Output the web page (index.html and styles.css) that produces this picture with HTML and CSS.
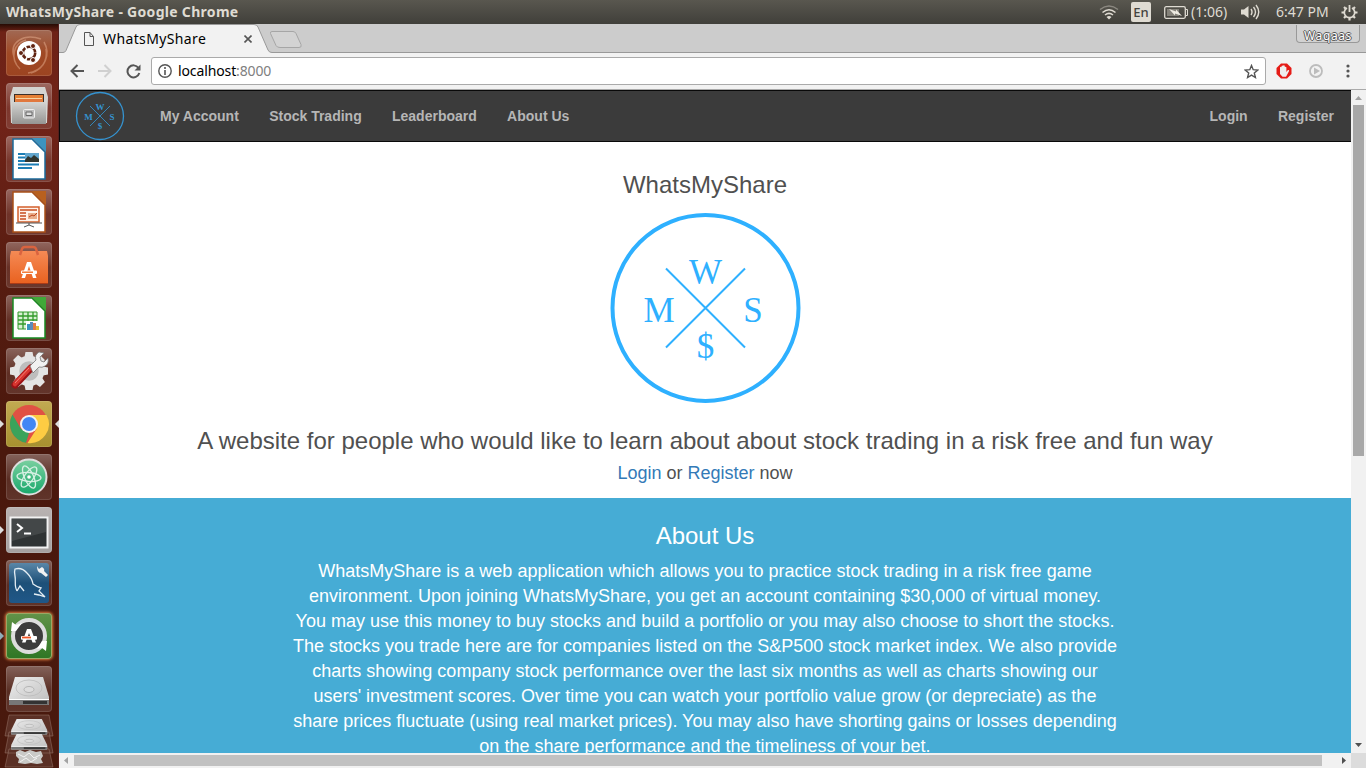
FILE: index.html
```html
<!DOCTYPE html>
<html lang="en">
<head>
<meta charset="utf-8">
<title>WhatsMyShare</title>
<link rel="stylesheet" href="styles.css">
</head>
<body>
<svg class="defs" width="0" height="0">
  <defs>
    <linearGradient id="metal" x1="0" y1="0" x2="0" y2="1"><stop offset="0" stop-color="#d4d4d2"/><stop offset="1" stop-color="#959593"/></linearGradient>
    <linearGradient id="drive" x1="0" y1="0" x2="1" y2="1"><stop offset="0" stop-color="#eee"/><stop offset="1" stop-color="#bdbdbd"/></linearGradient>
    <linearGradient id="bag" x1="0" y1="0" x2="0" y2="1"><stop offset="0" stop-color="#f58a55"/><stop offset="1" stop-color="#e9611f"/></linearGradient>
    <linearGradient id="sea" x1="0" y1="0" x2="0" y2="1"><stop offset="0" stop-color="#5a87a8"/><stop offset=".5" stop-color="#1d5078"/><stop offset="1" stop-color="#1f5788"/></linearGradient>
    <linearGradient id="mint" x1="0" y1="0" x2="0" y2="1"><stop offset="0" stop-color="#7bd0a0"/><stop offset="1" stop-color="#18a86b"/></linearGradient>
    <g id="disk"><path d="M9 11h28l6 20v7q0 1-1 1H4q-1 0-1-1v-7z" fill="url(#drive)"/><path d="M3 34h40v4q0 1-1 1H4q-1 0-1-1z" fill="#777"/><path d="M3 33.500h40" stroke="#fff"/><path d="M17 36.500h24" stroke="#333" stroke-width="3"/><ellipse cx="23" cy="22" rx="13" ry="8" fill="none" stroke="#bbb" stroke-width=".8"/><ellipse cx="23" cy="23.500" rx="5" ry="3" fill="#ddd" stroke="#aaa" stroke-width=".8"/></g>
    <g id="mark"><circle cx="100.500" cy="100" r="93" fill="none" stroke="currentColor" stroke-width="4"/><path d="M61 60.500l79 79M140 60.500l-79 79" stroke="currentColor" stroke-width="2"/></g>
  </defs>
</svg>
<div class="desktop">
  <header class="panel">
    <span class="panel-title">WhatsMyShare - Google Chrome</span>
    <div class="indicators">
      <svg class="wifi" width="20" height="16" viewBox="0 0 20 16" fill="none" stroke="#dfdbd2" stroke-width="1.500"><path d="M1 5.500q9-7 18 0" stroke="#8b8880"/><path d="M3.500 8.500q6.500-5.500 13 0M6 11q4-3.300 8 0"/><path d="M7.500 13q2.500-2 5 0L10 15.500z" fill="#dfdbd2" stroke="none"/></svg>
      <span class="lang">En</span>
      <svg class="battery" width="24" height="13" viewBox="0 0 24 13"><rect x=".7" y=".7" width="20.600" height="11.600" rx="1.500" fill="none" stroke="#dfdbd2" stroke-width="1.300"/><path d="M22 3.500h1.500v6H22" fill="none" stroke="#dfdbd2"/><path d="M3 3h12v7H3z" fill="#85827a"/><path d="M5 3l7 2.500V3.500l6 6.500-7-2.500V9.500z" fill="#eeeae1"/></svg>
      <span class="remaining">(1:06)</span>
      <svg class="volume" width="20" height="16" viewBox="0 0 20 16"><path d="M1 5.500h3L8.500 2v12L4 10.500H1z" fill="#dfdbd2"/><path d="M11 5q2 3 0 6M13.500 3q4 5 0 10M16 1q5.500 7 0 14" fill="none" stroke="#dfdbd2" stroke-width="1.400"/></svg>
      <span class="clock">6:47 PM</span>
      <svg class="power" width="17" height="17" viewBox="0 0 17 17" fill="none" stroke="#dfdbd2"><path d="M6 3.900a5.200 5.200 0 1 0 5 0" stroke-width="1.700"/><path d="M8.500 1v7" stroke-width="1.800"/><path d="M3 3l1.700 1.700M14 3l-1.700 1.700M.5 8.500h2.800M13.700 8.500h2.800M3 14l1.700-1.700M14 14l-1.700-1.700M8.500 13.700v2.800" stroke-width="2.200"/></svg>
    </div>
  </header>
  <div class="workspace">
    <nav class="launcher">
      <div class="tile ubuntu"><svg viewBox="0 0 46 46"><path d="M8 27C3 12 18 3 35 9M14 39C3 28 8 13 20 10M38 12c7 12 1 27-13 31M22 43c14-2 20-12 18-24" fill="none" stroke="#eeb798" stroke-opacity=".45" stroke-width="1.500"/><circle cx="23" cy="23" r="12" fill="#fff"/><circle cx="23" cy="23" r="6.200" fill="none" stroke="#612412" stroke-width="2.600" stroke-dasharray="11.500 1.500"/><g fill="#612412" stroke="#fff"><circle cx="15" cy="23" r="2.500"/><circle cx="27" cy="16" r="2.500"/><circle cx="27" cy="30" r="2.500"/></g></svg></div>
      <div class="tile"><svg viewBox="0 0 46 46"><path d="M7 4h32l3 10-1 26H5L4 14z" fill="#d4d4d1"/><path d="M8 11h30v10H8z" fill="#3d302a"/><path d="M9 12h28v7H9z" fill="#e58035"/><path d="M10 15h26v5H10z" fill="#f7d5a2"/><path d="M10 16h26v3H10z" fill="#e1783e"/><path d="M6 19h34v22H6z" fill="url(#metal)"/><rect x="17.500" y="26.500" width="11" height="8.500" rx="1" fill="#bbb" stroke="#eee"/><path d="M20 29h6v3.500h-6z" fill="#ddd" stroke="#666"/></svg></div>
      <div class="tile"><svg viewBox="0 0 46 46"><path d="M7 3h19l13 13v27H7z" fill="#fff" stroke="#1a6b9c" stroke-width="1.500"/><path d="M26 2h14v14z" fill="#3c93bf"/><path d="M12 17h9v2h-9zm0 3.500h9v2h-9zm0 3.500h9v2h-9zm0 3.500h21v2H12zm0 3.500h14v2H12z" fill="#1b7db5"/><path d="M19 17h14v9H19z" fill="#62a6ce"/><path d="M19 26v-2l3-4 3 2 3-3 5 4v3z" fill="#30352f"/></svg></div>
      <div class="tile"><svg viewBox="0 0 46 46"><path d="M7 3h19l13 13v27H7z" fill="#fff" stroke="#a95018" stroke-width="1.500"/><path d="M26 2h14v14z" fill="#b8601f"/><path d="M12 18h21v15H12z" fill="#fff3eb" stroke="#d4602c" stroke-width="1.500"/><path d="M14 21h17M14 24h6m-6 3h6m-6 3h6" stroke="#c74d20" stroke-width="1.500"/><path d="M22 24h9v6h-9z" fill="#e9ad8b"/><path d="M23 28l3-2 2 1 3-3" fill="none" stroke="#ba4219"/><path d="M10 34h26M23 34v2l-5 2m5-2l5 2" fill="none" stroke="#555"/></svg></div>
      <div class="tile"><svg viewBox="0 0 46 46"><path d="M5 9h36l1 5v28H4V14z" fill="url(#bag)"/><path d="M14 13l2-6q.5-2 3-2h8q2.500 0 3 2l2 6" fill="none" stroke="#d9633f" stroke-width="2.500"/><path d="M4 41.500h38" stroke="#ab3b16"/><path d="M15.500 36L21 20h4l5.500 16H27l-4-12-4 12z" fill="#fff"/><rect x="15" y="28.500" width="16" height="3.500" rx="1" fill="#fff"/><path d="M16 30.200h11" stroke="#f37028" stroke-width="1.400"/></svg></div>
      <div class="tile"><svg viewBox="0 0 46 46"><path d="M7 3h19l13 13v27H7z" fill="#fff" stroke="#188a22" stroke-width="1.500"/><path d="M26 2h14v14z" fill="#40a938"/><path d="M12 17h19v17H12z" fill="#d8f0d3" stroke="#329a2b"/><path d="M12 21h19M12 25h19M12 29h19M17 17v17M22 17v17M27 17v17" stroke="#329a2b" stroke-width="1.300"/><path d="M20 26h13v9H20z" fill="#fff"/><path d="M21 29h3v6h-3z" fill="#3795bd"/><path d="M24 27h3v8h-3z" fill="#5c8aba"/><path d="M27 28h3v7h-3z" fill="#e17a46"/><path d="M30 31h3v4h-3z" fill="#e6bd34"/></svg></div>
      <div class="tile"><svg viewBox="0 0 46 46"><circle cx="23" cy="23" r="12.500" fill="#bdbdbd" stroke="#e4e4e4" stroke-width="5.500"/><g fill="#e4e4e4"><path id="cog" d="M18.500 9l1-5h7l1 5zM18.500 37l1 5h7l1-5z"/><use href="#cog" transform="rotate(45 23 23)"/><use href="#cog" transform="rotate(90 23 23)"/><use href="#cog" transform="rotate(135 23 23)"/></g><path d="M9 37l16-17" stroke="#9c1216" stroke-width="7" stroke-linecap="round"/><path d="M9 36l15-16" stroke="#d8352f" stroke-width="4.500" stroke-linecap="round"/><path d="M9 35l14-15" stroke="#f08078"/><path d="M24 18l6-6q-2-5 3-8l5 1-4 4 1 4 3 1 4-4q1 6-3 8-3 2-6 1l-6 6z" fill="#f1f1f1" stroke="#777" stroke-width=".8"/></svg></div>
      <div class="tile chrome"><svg viewBox="0 0 46 46"><circle cx="23" cy="23" r="19" fill="#e05144"/><path d="M6.500 13.500L15 28l8 4-3 9.800A19 19 0 0 1 6.500 13.500z" fill="#3ba35b"/><path d="M23 14h17.500A19 19 0 0 1 21.500 42l9-14z" fill="#fdcc43"/><circle cx="23" cy="23" r="9" fill="#f2f2f2"/><circle cx="23" cy="23" r="7" fill="#4286f4"/></svg><i class="arrow left"></i><i class="arrow right"></i></div>
      <div class="tile"><svg viewBox="0 0 46 46"><circle cx="23" cy="23" r="17.500" fill="url(#mint)" stroke="#dedede" stroke-width="2"/><g fill="none" stroke="#d6f0e3" stroke-width="1.300"><ellipse cx="23" cy="23" rx="4.500" ry="12" transform="rotate(-25 23 23)"/><ellipse cx="23" cy="23" rx="4.500" ry="12" transform="rotate(35 23 23)"/><ellipse cx="23" cy="23" rx="4.500" ry="12" transform="rotate(95 23 23)"/></g><circle cx="23" cy="23" r="1.800" fill="#fff"/></svg></div>
      <div class="tile term"><svg viewBox="0 0 46 46"><rect x="4.500" y="10.500" width="37" height="30" fill="#2f3334" stroke="#f2f2f2" stroke-width="2"/><path d="M6 12h34v13L6 34z" fill="#434748"/><path d="M11 17l5 4-5 4" fill="none" stroke="#fff" stroke-width="2"/><path d="M18 26.500h7" stroke="#fff" stroke-width="2"/></svg><i class="arrow left"></i></div>
      <div class="tile"><svg viewBox="0 0 46 46"><rect x="3" y="3" width="40" height="40" rx="3" fill="url(#sea)"/><path d="M11 31C8 26 10 21 9 16q-1-4 0-7 7-2 12 4 5 5 6 11 4 3 8 4l-2 3 6 6-6-2-5-1M11 31l3-5 4 5" fill="none" stroke="#e4eef4" stroke-width="1.300"/><path d="M31 6l2 3 3-2q3 2 2 4l4 4-2 2-5-4q-4 0-4-7z" fill="#f2f2f2"/></svg></div>
      <div class="tile updater"><svg viewBox="0 0 46 46"><circle cx="23" cy="23" r="16" fill="#3c3c3c" stroke="#ddd" stroke-width="4"/><path d="M5 18l1-9 4 3 6-2-6 8zM41 28l-1 10-4-3-5 1 5-8z" fill="#fff"/><path d="M16 29.500L21 16h4l5 13.500h-3.500L23 20l-3.500 9.500z" fill="#fff"/><rect x="15" y="23" width="16" height="3.800" rx="1" fill="#fff"/><path d="M16 24.500h9" stroke="#ee5424" stroke-width="1.800"/></svg><i class="arrow left hollow"></i></div>
      <div class="tile"><svg viewBox="0 0 46 46"><use href="#disk"/></svg></div>
      <div class="folded"><svg width="50" height="54" viewBox="0 0 50 54"><g fill="#fff" fill-opacity=".1" stroke="#ad8b80" stroke-opacity=".4"><path d="M5 1h40l4 21H1zM5 18h40l4 21H1zM5 35h40l4 18H1z"/></g><use href="#disk" transform="translate(4.500 -1) scale(.9 .55)"/><use href="#disk" transform="translate(4.500 14) scale(.9 .55)"/><path d="M12 38l4-2 5 2 5-2 6 2 5-1 2 5-2 3 2 4-6 1-6-1-6 1-7-1 1-4-3-3z" fill="#cacac7"/><path d="M14 40l6 3 5-4 5 5 6-3M16 48l6-4 5 4 6-4" fill="none" stroke="#fff" stroke-opacity=".8"/></svg></div>
    </nav>
    <main class="browser">
      <div class="tabstrip">
        <svg class="tabshape" width="260" height="29" viewBox="0 0 260 29"><path d="M0 29v-.5h4q2 0 3-2L17 3q1-2.500 4-2.500h174q3 0 4 2.500l10 23q1 2.500 4 2.500v.5z" fill="#f2f2f2"/><path d="M0 28.500h4q2 0 3-2L17 3q1-2.500 4-2.500h174q3 0 4 2.500l10 23q1 2.500 4 2.500h47" fill="none" stroke="#999"/><path d="M213 7.500h21q2 0 3 2l5 11q1 3-2 3h-19q-3 0-4-2l-5.500-12q-.5-2 1.500-2z" fill="#d3d3d3" stroke="#a6a6a6"/></svg>
        <div class="tab"><svg width="10" height="14" viewBox="0 0 10 14" fill="none" stroke="#555"><path d="M.5.500h5.500l3.500 4v9H.5zM6 .5v4h3.500"/></svg><span>WhatsMyShare</span><svg class="close" width="8" height="8" viewBox="0 0 8 8" stroke="#555" stroke-width="1.600"><path d="M.5.500l7 7M7.500.500l-7 7"/></svg></div>
        <span class="profile">Waqaas</span>
      </div>
      <div class="toolbar">
        <svg class="back" width="14" height="14" viewBox="0 0 14 14" fill="none" stroke="#555" stroke-width="2"><path d="M14 7H1.500M7.500 1l-6 6 6 6"/></svg>
        <svg class="forward" width="14" height="14" viewBox="0 0 14 14" fill="none" stroke="#d0d0d0" stroke-width="2"><path d="M0 7h12.500M6.500 1l6 6-6 6"/></svg>
        <svg class="reload" width="15" height="15" viewBox="0 0 15 15"><path d="M12.500 4A6 6 0 1 0 13.300 9" fill="none" stroke="#555" stroke-width="2"/><path d="M14.500.500v6h-6z" fill="#555"/></svg>
        <div class="omnibox">
          <svg width="14" height="14" viewBox="0 0 14 14"><circle cx="7" cy="7" r="6.200" fill="none" stroke="#555" stroke-width="1.400"/><path d="M7 6v5M7 3v2" stroke="#555" stroke-width="1.600"/></svg>
          <span class="url">localhost<span>:8000</span></span>
          <svg class="star" width="15" height="15" viewBox="0 0 15 15"><path d="M7.500 1.500l1.700 4.200 4.600.4-3.500 2.900 1.100 4.500-3.900-2.400-3.900 2.400 1.100-4.500L1.200 6.100l4.600-.4z" fill="none" stroke="#555" stroke-width="1.400"/></svg>
        </div>
        <svg class="adblock" width="16" height="16" viewBox="0 0 16 16"><path d="M5 .5h6L15.500 5v6L11 15.500H5L.5 11V5z" fill="#e51b16"/><path d="M4 8V4.200q.9-1 1.500 0V3q.9-1 1.600 0v-.5q.9-.8 1.700.3V4q1.200-.8 1.600.4V9l1.500-1.900q1.500-.3 1.200.8L11 12l-1 1.800H6.500L4 11z" fill="#eee"/></svg>
        <svg class="play" width="14" height="14" viewBox="0 0 14 14"><circle cx="7" cy="7" r="6" fill="none" stroke="#bcbcbc" stroke-width="1.800"/><path d="M5 3.500L11 7l-6 3.500z" fill="#bcbcbc"/></svg>
        <svg class="menu" width="4" height="14" viewBox="0 0 4 14" fill="#555"><circle cx="2" cy="2" r="1.600"/><circle cx="2" cy="7" r="1.600"/><circle cx="2" cy="12" r="1.600"/></svg>
      </div>
      <div class="viewport">
        <div class="page">
          <nav class="navbar">
            <svg class="brand" width="50" height="50" viewBox="0 0 50 50"><circle cx="25" cy="25" r="23.500" fill="none" stroke="#3593d0" stroke-width="1.300"/><path d="M15 15l20 20M35 15l-20 20" stroke="#3585b8"/><g fill="#3593d0" font-family="Liberation Serif, serif" font-size="9" font-weight="bold" text-anchor="middle"><text x="25" y="19">W</text><text x="13.500" y="29">M</text><text x="37" y="29">S</text><text x="25" y="38">$</text></g></svg>
            <a>My Account</a><a>Stock Trading</a><a>Leaderboard</a><a>About Us</a>
            <a class="login">Login</a><a>Register</a>
          </nav>
          <section class="hero">
            <h1>WhatsMyShare</h1>
            <svg class="logo" width="200" height="200" viewBox="0 0 200 200"><use href="#mark"/><g fill="#2eb0ff" font-family="Liberation Serif, serif" font-size="35" text-anchor="middle"><text x="100.500" y="76">W</text><text x="54" y="114">M</text><text x="148" y="114">S</text><text x="100.500" y="150">$</text></g></svg>
            <h2>A website for people who would like to learn about about stock trading in a risk free and fun way</h2>
            <p><a>Login</a> or <a>Register</a> now</p>
          </section>
          <section class="about">
            <h2>About Us</h2>
            <p>WhatsMyShare is a web application which allows you to practice stock trading in a risk free game<br>environment. Upon joining WhatsMyShare, you get an account containing $30,000 of virtual money.<br>You may use this money to buy stocks and build a portfolio or you may also choose to short the stocks.<br>The stocks you trade here are for companies listed on the S&amp;P500 stock market index. We also provide<br>charts showing company stock performance over the last six months as well as charts showing our<br>users' investment scores. Over time you can watch your portfolio value grow (or depreciate) as the<br>share prices fluctuate (using real market prices). You may also have shorting gains or losses depending<br>on the share performance and the timeliness of your bet.</p>
          </section>
        </div>
        <div class="vscroll"><svg width="15" height="15"><path d="M4 10h7L7.500 6z" fill="#a3a3a3"/></svg><div class="thumb"></div><svg class="end" width="15" height="15"><path d="M4 5h7L7.500 9z" fill="#505050"/></svg></div>
        <div class="hscroll"><svg width="15" height="15"><path d="M9 4v7L5 7.500z" fill="#a3a3a3"/></svg><div class="thumb"></div><svg class="end" width="15" height="15"><path d="M6 4v7l4-3.500z" fill="#505050"/></svg></div>
        <div class="corner"></div>
      </div>
    </main>
  </div>
</div>
</body>
</html>
```
FILE: styles.css
```css
* { box-sizing: border-box; }
body { margin: 0; overflow: hidden; font-family: "Liberation Sans", Arial, sans-serif; }
h1, h2, p { margin: 0; font-weight: normal; }
svg { display: block; flex: none; }
.defs { position: absolute; }
.desktop { width: 1366px; height: 768px; display: flex; flex-direction: column; overflow: hidden; }

.panel { height: 24px; flex: none; display: flex; align-items: center; justify-content: space-between; padding: 0 8px 0 6px; background: linear-gradient(#59574f, #403f3a); color: #dfdbd2; font: 14px/24px "Noto Sans", sans-serif; white-space: nowrap; }
.panel-title { font-weight: bold; letter-spacing: .3px; }
.indicators { display: flex; align-items: center; }
.lang { width: 20px; height: 20px; margin-left: 12px; border-radius: 2px; background: #dfdbd2; color: #45433e; text-align: center; line-height: 20px; font-size: 13px; font-weight: 500; }
.battery { margin-left: 13px; }
.remaining { width: 37px; margin-left: 3px; }
.volume { margin-left: 12px; }
.clock { width: 53px; margin-left: 16px; }
.power { margin-left: 12px; }

.workspace { flex: 1; min-height: 0; display: flex; }
.launcher { width: 59px; flex: none; display: flex; flex-direction: column; gap: 7px; padding: 6px 0 0 6px; background: linear-gradient(#260b04 0, #6e2216 8px, #702318 100px, #561c10 260px, #4a180d 420px, #49190d 100%); border-right: 1px solid #551e1b; }
.tile { position: relative; width: 46px; height: 46px; flex: none; border-radius: 4px; background: linear-gradient(rgba(255,255,255,.32), rgba(255,255,255,.09) 55%, rgba(255,255,255,.12)); box-shadow: inset 0 0 0 1px rgba(255,255,255,.12); }
.tile svg { width: 46px; height: 46px; }
.ubuntu { background: linear-gradient(#a16954, #a04925 50%, #9c4421); }
.chrome { background: linear-gradient(#c2aa52, #a7902f); }
.term { background: linear-gradient(#b9b3b2, #a5a1a0); }
.updater { background: linear-gradient(#629349, #2e7624); box-shadow: inset 0 0 0 1px #9ba765, 0 0 3px 1px #e08042; }
.arrow { position: absolute; top: 19px; border: 4px solid transparent; }
.arrow.left { left: -6px; border-left-color: #ddd; border-right-width: 0; }
.arrow.right { right: -7px; border-right-color: #ddd; border-left-width: 0; }
.arrow.hollow { border-left-color: #8faeb9; }
.folded { width: 50px; margin: -5px 0 0 -2px; }

.browser { flex: 1; min-width: 0; display: flex; flex-direction: column; }
.tabstrip { position: relative; height: 29px; flex: none; background: #ccc; border-bottom: 1px solid #999; }
.tabshape { position: absolute; left: 0; top: 0; }
.tab { position: relative; display: flex; align-items: center; width: 193px; height: 29px; margin-left: 25px; font: 14px/29px "Noto Sans", sans-serif; color: #000; }
.tab span { margin-left: 9px; letter-spacing: .37px; white-space: nowrap; }
.close { margin: 1px 25px 0 auto; }
.profile { position: absolute; right: 6px; top: 1px; width: 64px; height: 18px; border: 1px solid #999; border-top: 0; border-radius: 0 0 4px 4px; background: #d2d2d2; color: #fff; font: 12px/21px "Noto Sans", sans-serif; letter-spacing: .6px; text-align: center; text-shadow: 1px 0 #555, -1px 0 #555, 0 1px #555, 0 -1px #555; }
.toolbar { height: 37px; flex: none; display: flex; align-items: center; padding: 0 16px 0 11px; background: #f2f2f2; border-bottom: 1px solid #aaa; }
.forward { margin-left: 14px; }
.reload { margin-left: 14px; }
.omnibox { width: 1115px; height: 28px; margin-left: 10px; display: flex; align-items: center; padding: 0 6px; border: 1px solid #aaa; border-radius: 3px; background: #fff; font: 14px/26px "Noto Sans", sans-serif; }
.url { margin-left: 6px; letter-spacing: -.12px; color: #000; }
.url span { color: #808080; }
.star { margin-left: auto; }
.adblock { margin-left: 10px; }
.play { margin-left: 17px; }
.menu { margin-left: auto; }

.viewport { flex: 1; min-height: 0; display: grid; grid-template: 663px 15px / 1292px 15px; }
.page { overflow: hidden; background: #fff; text-align: center; }
.navbar { height: 52px; display: flex; align-items: center; padding: 0 17px 0 15px; border: 1px solid #090909; border-right: 0; background: #3b3b3b; color: #b6b6b6; font-size: 14px; font-weight: bold; line-height: 20px; }
.brand { margin-right: 35px; }
.navbar a { margin-right: 30.300px; white-space: nowrap; }
.navbar a:last-child { margin-right: 0; }
.navbar .login { margin-left: auto; }
.hero { height: 356px; padding-top: 30px; color: #505050; }
.hero h1, .hero h2, .about h2 { font-size: 24px; line-height: 26px; white-space: nowrap; }
.logo { margin: 10px auto 20px; color: #2eb0ff; }
.hero p { margin-top: 7px; font-size: 18px; line-height: 25px; }
.hero p a { color: #337ab7; }
.about { height: 300px; padding-top: 25px; background: #46acd5; color: #fff; }
.about p { margin-top: 10px; font-size: 18px; line-height: 25px; white-space: nowrap; }
.vscroll { display: flex; flex-direction: column; align-items: center; background: #f1f1f1; }
.vscroll .thumb { width: 11px; height: 351px; background: #a8a8a8; }
.vscroll .end { margin-top: auto; }
.hscroll { display: flex; align-items: center; background: #f1f1f1; }
.hscroll .thumb { width: 1248px; height: 11px; background: #c1c1c1; }
.hscroll .end { margin-left: auto; }
.corner { background: #dcdcdc; }
```
